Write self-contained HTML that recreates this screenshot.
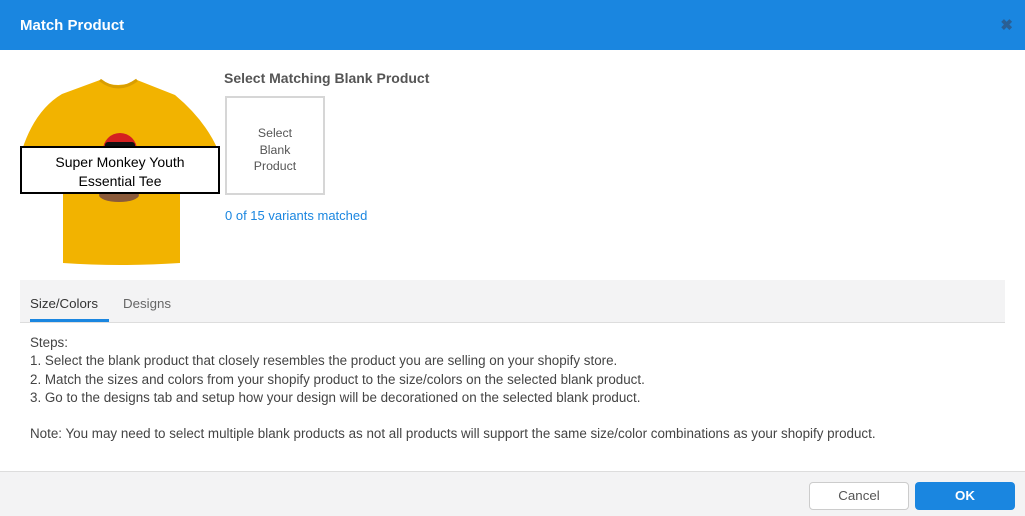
<!DOCTYPE html>
<html><head><style>
*{box-sizing:border-box;margin:0;padding:0}
body{width:1025px;height:516px;background:#fff;font-family:"Liberation Sans",Arial,sans-serif;position:relative;overflow:hidden;color:#444}
.hdr{position:absolute;left:0;top:0;width:1025px;height:50px;background:#1a86e0;color:#fff;font-weight:bold;font-size:15px;line-height:52px;padding-left:20px}
.x{position:absolute;right:12px;top:0;color:#2a5f95;font-size:15px;font-weight:bold}
.title{position:absolute;left:224px;top:70px;font-size:14px;font-weight:bold;color:#555}
.box{position:absolute;left:225px;top:96px;width:100px;height:99px;border:2px solid #d6d6d6;font-size:12.3px;color:#555;text-align:center;padding-top:27px;line-height:16.5px}
.var{position:absolute;left:225px;top:208px;font-size:13px;color:#1a86e0}
.label{position:absolute;left:20px;top:146px;width:200px;height:48px;border:2px solid #000;background:#fff;color:#000;text-align:center;font-size:14px;line-height:19px;padding-top:5px}
.tabs{position:absolute;left:20px;top:280px;width:985px;height:43px;background:#f3f3f4;border-bottom:1px solid #ddd}
.t1{position:absolute;left:10px;top:16px;font-size:13.3px;color:#333}
.t1b{position:absolute;left:10px;top:39px;width:79px;height:3px;background:#1a86e0}
.t2{position:absolute;left:103px;top:16px;font-size:13.3px;color:#666}
.steps{position:absolute;left:30px;top:334px;font-size:13.4px;line-height:18.3px;color:#444}
.foot{position:absolute;left:0;top:471px;width:1025px;height:45px;background:#f3f3f4;border-top:1px solid #ddd}
.btn{position:absolute;top:10px;height:28px;border-radius:4px;font-size:13.3px;text-align:center;line-height:26px}
.cancel{left:809px;width:100px;border:1px solid #ccc;background:#fff;color:#555}
.ok{left:915px;width:100px;background:#1a86e0;color:#fff;font-weight:bold;line-height:28px}
</style></head><body>
<div class="hdr">Match Product<span class="x">✖</span></div>
<svg style="position:absolute;left:0;top:50px" width="230" height="230">
<path d="M100 30 Q118 40 137 30 L175 45 Q205 70 218 100 L185 110 L180 102 L180 213 Q120 217 63 213 L63 100 L58 108 L22 100 Q35 60 62 44 Z" fill="#f2b300"/>
<path d="M100 30 Q118 44 137 30" stroke="#d99e00" stroke-width="3" fill="none"/>
<circle cx="120" cy="100" r="17" fill="#d42020"/>
<rect x="105" y="92" width="30" height="8" rx="3" fill="#111"/>
<ellipse cx="119" cy="145" rx="20" ry="7" fill="#8a5a3a"/>
</svg>
<div class="label">Super Monkey Youth<br>Essential Tee</div>
<div class="title">Select Matching Blank Product</div>
<div class="box">Select<br>Blank<br>Product</div>
<div class="var">0 of 15 variants matched</div>
<div class="tabs"><span class="t1">Size/Colors</span><div class="t1b"></div><span class="t2">Designs</span></div>
<div class="steps">Steps:<br>1. Select the blank product that closely resembles the product you are selling on your shopify store.<br>2. Match the sizes and colors from your shopify product to the size/colors on the selected blank product.<br>3. Go to the designs tab and setup how your design will be decorationed on the selected blank product.<br><br>Note: You may need to select multiple blank products as not all products will support the same size/color combinations as your shopify product.</div>
<div class="foot"><div class="btn cancel">Cancel</div><div class="btn ok">OK</div></div>
</body></html>
